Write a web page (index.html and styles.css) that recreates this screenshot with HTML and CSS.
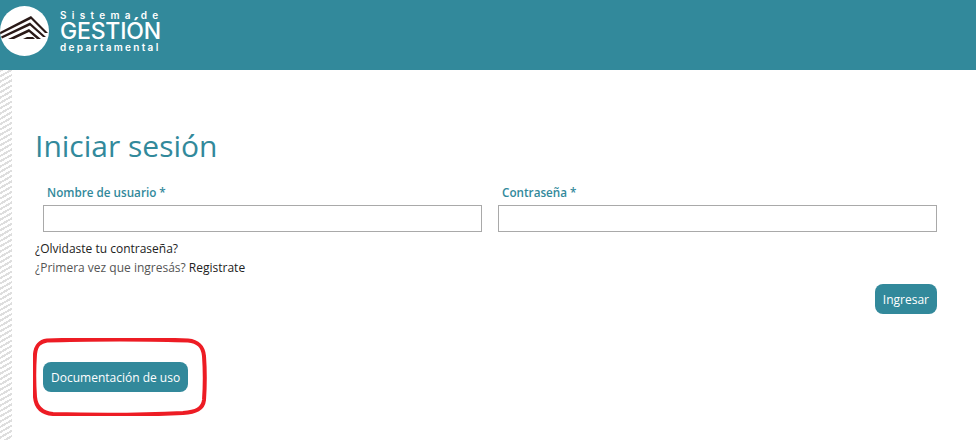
FILE: index.html
```html
<!doctype html>
<html>
	<head>
		<meta http-equiv="Content-Type" content="text/html; charset=utf-8" />
		<title>Iniciar sesión</title>
		<link rel="stylesheet" href="styles.css">
	</head>
	<body>
		<header class="top_bar">
			<div class="logo_circle">
				<svg class="logo_icon" viewBox="0 0 49 50" width="49" height="50">
					<path d="M0 26 L31 10 L48 27 L45 27 L31 13 L0 28.500 Z" fill="#2a1a18"/>
					<path d="M1 30.500 L30 16.500 L46 31 L43 31 L30 19.500 L2 32.500 Z" fill="#2a1a18"/>
					<path d="M8 33 L29 23 L41 33 L37 33 L29 26 L14 33 Z" fill="#2a1a18"/>
					<path d="M23 33 L27 31 L33 31 L35 33 Z" fill="#2a1a18"/>
				</svg>
			</div>
			<div class="logo_text">
				<div class="logo_line_top">Sistema de</div>
				<div class="logo_line_big">GESTIÓN</div>
				<div class="logo_line_bottom">departamental</div>
			</div>
		</header>
		<main class="page">
			<div class="stripes"></div>
			<section class="content">
				<h1 class="title">Iniciar sesión</h1>
				<div class="fields">
					<div class="field">
						<label class="field_label">Nombre de usuario *</label>
						<input class="field_input" type="text" />
					</div>
					<div class="field">
						<label class="field_label">Contraseña *</label>
						<input class="field_input" type="password" />
					</div>
				</div>
				<div class="links">
					<div class="link_line"><a class="link">¿Olvidaste tu contraseña?</a></div>
					<div class="link_line">¿Primera vez que ingresás? <a class="link">Registrate</a></div>
				</div>
				<div class="submit_row">
					<button class="btn">Ingresar</button>
				</div>
				<div class="doc_row">
					<button class="btn">Documentación de uso</button>
					<svg class="doc_mark" viewBox="0 0 174 78" width="174" height="78">
						<path d="M14 2.500 C50 1 125 1 155 2.500 C165 3.500 170 8 171 18 C172 32 172 48 171 62 C170 71 163 74 150 75 C110 77 55 77 20 76 C9 75 3 70 2 59 C1 45 1 30 2 16 C3 7 7 3.500 14 2.500 Z" fill="none" stroke="#ed1c24" stroke-width="4"/>
					</svg>
				</div>
			</section>
		</main>
	</body>
</html>
```

FILE: styles.css
```css
* {
	box-sizing : border-box;
}
html, body {
	height : 100%;
}
body {
	margin : 0;
	background-color : white;
	font-family : "Open Sans", "Liberation Sans", sans-serif;
	overflow : hidden;
}
.top_bar {
	display : flex;
	align-items : flex-start;
	height : 70px;
	background-color : #32899b;
}
.logo_circle {
	width : 49px;
	height : 50px;
	margin-top : 6px;
	border-radius : 50%;
	background-color : white;
	overflow : hidden;
	flex : none;
}
.logo_icon {
	display : block;
}
.logo_text {
	margin-left : 11px;
	margin-top : 10px;
	color : white;
	font-family : "Inter", "Liberation Sans", sans-serif;
	font-weight : 600;
	width : 102px;
}
.logo_line_top {
	font-size : 10px;
	line-height : 11px;
	letter-spacing : 5.300px;
	word-spacing : -3px;
	white-space : nowrap;
}
.logo_line_big {
	font-size : 23px;
	font-weight : 500;
	line-height : 21px;
	letter-spacing : -0.200px;
	white-space : nowrap;
}
.logo_line_bottom {
	font-size : 10px;
	line-height : 11px;
	letter-spacing : 2.300px;
	white-space : nowrap;
}
.page {
	display : flex;
	height : 370px;
}
.stripes {
	width : 12px;
	flex : none;
	background-image : repeating-linear-gradient(150deg, #dedede 0, #dedede 2px, white 2px, white 4.600px);
}
.content {
	flex : 1;
	padding : 55px 39px 0 23px;
}
.title {
	margin : 0;
	color : #32899b;
	font-size : 30px;
	font-weight : 400;
	line-height : 42px;
}
.fields {
	display : flex;
	gap : 16px;
	margin-top : 17px;
	padding-left : 8px;
}
.field {
	flex : 1;
}
.field_label {
	display : block;
	padding-left : 4px;
	color : #32899b;
	font-size : 11.700px;
	font-weight : 600;
	line-height : 16px;
	margin-bottom : 5px;
}
.field_input {
	display : block;
	width : 100%;
	height : 27px;
	border : 1px solid #a9a9a9;
	background-color : white;
}
.links {
	margin-top : 7px;
	color : #555;
	font-size : 12px;
}
.link_line {
	line-height : 19px;
}
.link {
	color : #222;
}
.submit_row {
	display : flex;
	justify-content : flex-end;
	margin-top : 7px;
}
.btn {
	height : 30px;
	padding : 0 8px;
	border : 0;
	border-radius : 8px;
	background-color : #32899b;
	color : white;
	font-family : inherit;
	font-size : 12px;
	font-weight : 400;
}
.doc_row {
	position : relative;
	display : flex;
	margin-top : 48px;
	padding-left : 8px;
}
.doc_mark {
	position : absolute;
	left : -2px;
	top : -24px;
}
```
